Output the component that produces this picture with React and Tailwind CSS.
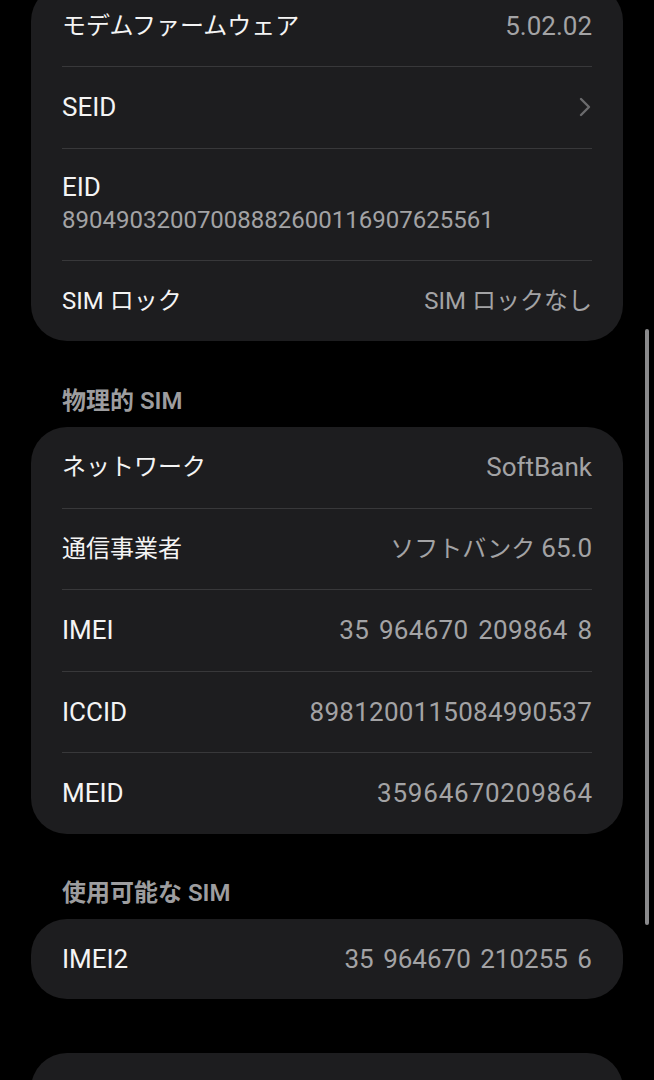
import React from 'react';

const FONT = { fontFamily: 'Roboto, "Noto Sans CJK JP", sans-serif' };

function Chevron() {
  return (
    <svg width="12" height="20" viewBox="0 0 12 20" className="shrink-0 mr-[1px]">
      <polyline points="2,2 10,10 2,18" fill="none" stroke="#6b6b6d" strokeWidth="2.4" strokeLinecap="round" strokeLinejoin="round" />
    </svg>
  );
}

function Divider() {
  return <div className="mx-[31px] h-px bg-[#38383a]" />;
}

function Row({ label, value, chevron, first, lc = 'text-[24px]', vc = 'text-[24px]' }) {
  return (
    <div className={`flex items-center justify-between px-[31px] ${first ? 'h-[81px]' : 'h-[80.5px]'}`}>
      <span className={`leading-[32px] text-[#f4f4f4] ${lc}`}>{label}</span>
      {value && <span className={`leading-[32px] text-[#a3a3a5] ${vc}`}>{value}</span>}
      {chevron && <Chevron />}
    </div>
  );
}

function Card({ rows, className = '' }) {
  return (
    <div className={`mx-[31px] bg-[#1d1d1f] rounded-[36px] overflow-hidden ${className}`}>
      {rows.map((r, i) => (
        <React.Fragment key={i}>
          {i > 0 && <Divider />}
          {r.sub ? (
            <div className="flex flex-col justify-center px-[31px] h-[111px]">
              <span className={`leading-[32px] text-[#f4f4f4] ${r.lc}`}>{r.label}</span>
              <span className="text-[24px] leading-[34px] text-[#a3a3a5]">{r.sub}</span>
            </div>
          ) : (
            <Row {...r} />
          )}
        </React.Fragment>
      ))}
    </div>
  );
}

function SectionLabel({ children, className = '' }) {
  return (
    <div className={`px-[62px] pb-[11px] text-[24px] leading-[30px] font-semibold text-[#9d9d9f] ${className}`}>
      {children}
    </div>
  );
}

// latin runs sit a bit larger than kana in the phone's font
const LATIN = 'text-[26px]';

export default function App() {
  return (
    <div className="relative w-[654px] h-[1080px] bg-black overflow-hidden" style={FONT}>
      <Card
        className="-mt-[15px]"
        rows={[
          { label: 'モデムファームウェア', value: '5.02.02', first: true, vc: LATIN },
          { label: 'SEID', chevron: true, lc: LATIN },
          { label: 'EID', sub: '89049032007008882600116907625561', lc: LATIN },
          { label: 'SIM ロック', value: 'SIM ロックなし' },
        ]}
      />

      <SectionLabel className="pt-[45px]">物理的 SIM</SectionLabel>
      <Card
        rows={[
          { label: 'ネットワーク', value: 'SoftBank', vc: LATIN },
          {
            label: '通信事業者',
            value: (
              <>
                ソフトバンク <span className="text-[26px]">65.0</span>
              </>
            ),
          },
          { label: 'IMEI', value: '35 964670 209864 8', lc: LATIN, vc: 'text-[26px] tracking-[0.3px] -mr-[0.3px] [word-spacing:3px]' },
          { label: 'ICCID', value: '8981200115084990537', lc: LATIN, vc: 'text-[26px] tracking-[0.25px]' },
          { label: 'MEID', value: '35964670209864', lc: LATIN, vc: 'text-[26px] tracking-[0.8px] -mr-[0.8px]' },
        ]}
      />

      <SectionLabel className="pt-[44px]">使用可能な SIM</SectionLabel>
      <Card rows={[{ label: 'IMEI2', value: '35 964670 210255 6', lc: LATIN, vc: 'text-[26px] [word-spacing:3px]' }]} />

      <div className="mx-[31px] mt-[54px] h-[120px] bg-[#1d1d1f] rounded-[36px]" />

      {/* scroll indicator */}
      <div className="absolute left-[645px] top-[329px] w-[4px] h-[596px] rounded-full bg-[#8a8a8c]" />
    </div>
  );
}
